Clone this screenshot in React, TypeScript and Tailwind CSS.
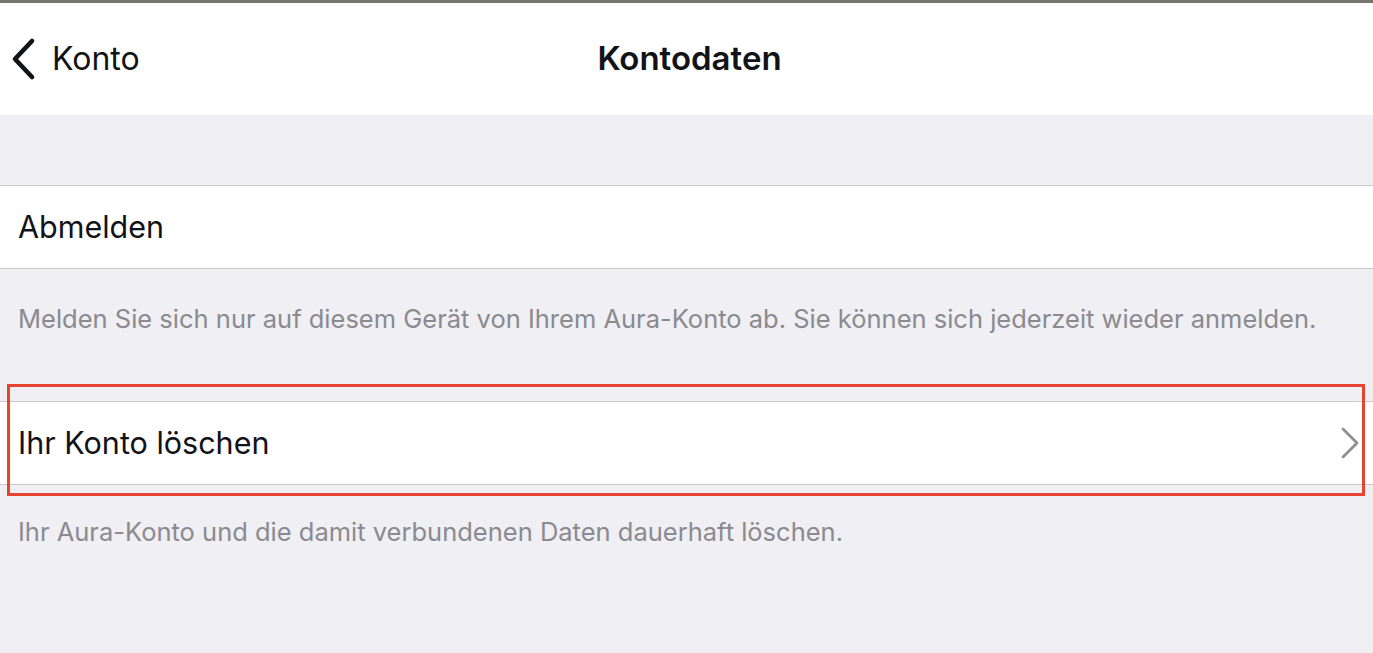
function Row({ label, chevron }: { label: string; chevron?: boolean }) {
  return (
    <div className="flex h-[84px] items-center justify-between border-y border-[#c8c7cc] bg-white pl-[18px] pr-[13px]">
      <span className="text-[30.5px] text-[#111318]">{label}</span>
      {chevron && (
        <svg width="20" height="32" viewBox="0 0 20 32" fill="none" stroke="#8e8e93" strokeWidth="2.8" strokeLinecap="round" strokeLinejoin="round">
          <polyline points="3,2 17,16 3,30" />
        </svg>
      )}
    </div>
  )
}

function Footnote({ text, top }: { text: string; top: string }) {
  return <p className={`px-[18px] text-[25.5px] leading-[30px] text-[#8a8a8f] ${top}`}>{text}</p>
}

export default function App() {
  return (
    <div className="flex h-[653px] w-full flex-col overflow-hidden bg-[#efeff4]" style={{ fontFamily: 'Inter, "Noto Sans", sans-serif' }}>
      <div className="h-[3px] bg-[#76766f]" />
      <header className="relative flex h-[112px] items-center bg-white">
        <div className="flex items-center pl-[11px] text-[#111318]">
          <svg width="26" height="44" viewBox="0 0 26 44" fill="none" stroke="#111318" strokeWidth="4.6" strokeLinecap="round" strokeLinejoin="round">
            <polyline points="21,4 4,22 21,40" />
          </svg>
          <span className="ml-[15px] text-[32px]">Konto</span>
        </div>
        <h1 className="absolute left-[calc(50%+3px)] -translate-x-1/2 text-[33px] font-semibold text-[#111318]">Kontodaten</h1>
      </header>

      <div className="h-[70px]" />
      <Row label="Abmelden" />
      <Footnote top="pt-[35px]" text="Melden Sie sich nur auf diesem Gerät von Ihrem Aura-Konto ab. Sie können sich jederzeit wieder anmelden." />

      <div className="relative mt-[67px]">
        <Row label="Ihr Konto löschen" chevron />
        {/* highlight frame */}
        <div className="pointer-events-none absolute left-[7px] right-[8px] top-[-17px] bottom-[-11px] border-[3px] border-[#e5452f]" />
      </div>
      <Footnote top="pt-[32px]" text="Ihr Aura-Konto und die damit verbundenen Daten dauerhaft löschen." />
    </div>
  )
}
